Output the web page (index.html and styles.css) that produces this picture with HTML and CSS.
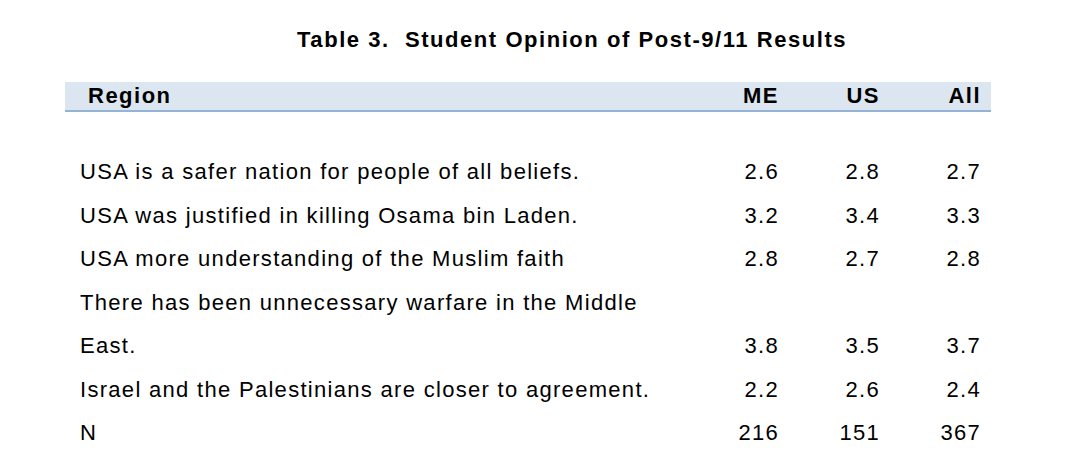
FILE: index.html
```html
<!DOCTYPE html>
<html>
<head>
<meta charset="utf-8">
<link rel="stylesheet" href="styles.css">
</head>
<body>
<div class="page">
  <h1 class="title">Table 3.&nbsp; Student Opinion of Post-9/11 Results</h1>
  <table class="results">
    <thead>
      <tr class="head">
        <th class="label">Region</th>
        <th class="num">ME</th>
        <th class="num">US</th>
        <th class="num">All</th>
      </tr>
    </thead>
    <tbody>
      <tr class="spacer"><td colspan="4"></td></tr>
      <tr><td class="label">USA is a safer nation for people of all beliefs.</td><td class="num">2.6</td><td class="num">2.8</td><td class="num">2.7</td></tr>
      <tr><td class="label">USA was justified in killing Osama bin Laden.</td><td class="num">3.2</td><td class="num">3.4</td><td class="num">3.3</td></tr>
      <tr><td class="label">USA more understanding of the Muslim faith</td><td class="num">2.8</td><td class="num">2.7</td><td class="num">2.8</td></tr>
      <tr><td class="label">There has been unnecessary warfare in the Middle</td><td class="num"></td><td class="num"></td><td class="num"></td></tr>
      <tr><td class="label">East.</td><td class="num">3.8</td><td class="num">3.5</td><td class="num">3.7</td></tr>
      <tr><td class="label">Israel and the Palestinians are closer to agreement.</td><td class="num">2.2</td><td class="num">2.6</td><td class="num">2.4</td></tr>
      <tr><td class="label">N</td><td class="num">216</td><td class="num">151</td><td class="num">367</td></tr>
    </tbody>
  </table>
</div>
</body>
</html>
```
FILE: styles.css
```css
html, body {
  margin: 0;
  padding: 0;
  background: #ffffff;
}
body {
  font-family: "Liberation Sans", Arial, sans-serif;
  color: #000000;
}
.page {
  padding: 26px 0 0 65px;
}
.title {
  margin: 0 0 28px 232px;
  font-size: 22px;
  font-weight: bold;
  line-height: 28px;
  letter-spacing: 1.55px;
}
.results {
  width: 926px;
  border-collapse: collapse;
  font-size: 22px;
  letter-spacing: 1.3px;
}
.results th,
.results td {
  padding: 0;
}
.head {
  background: #dce6f1;
  border-bottom: 2px solid #95b3d7;
}
.head th {
  height: 28px;
  font-weight: bold;
  line-height: 28px;
  letter-spacing: 1.5px;
}
.head th.label {
  text-align: left;
  padding-left: 23px;
}
.spacer td {
  height: 38px;
}
tbody td {
  height: 43.5px;
  line-height: 43.5px;
}
td.label {
  text-align: left;
  padding-left: 15px;
}
.results .num {
  box-sizing: border-box;
  width: 101px;
  text-align: right;
  padding-right: 10px;
}
```
